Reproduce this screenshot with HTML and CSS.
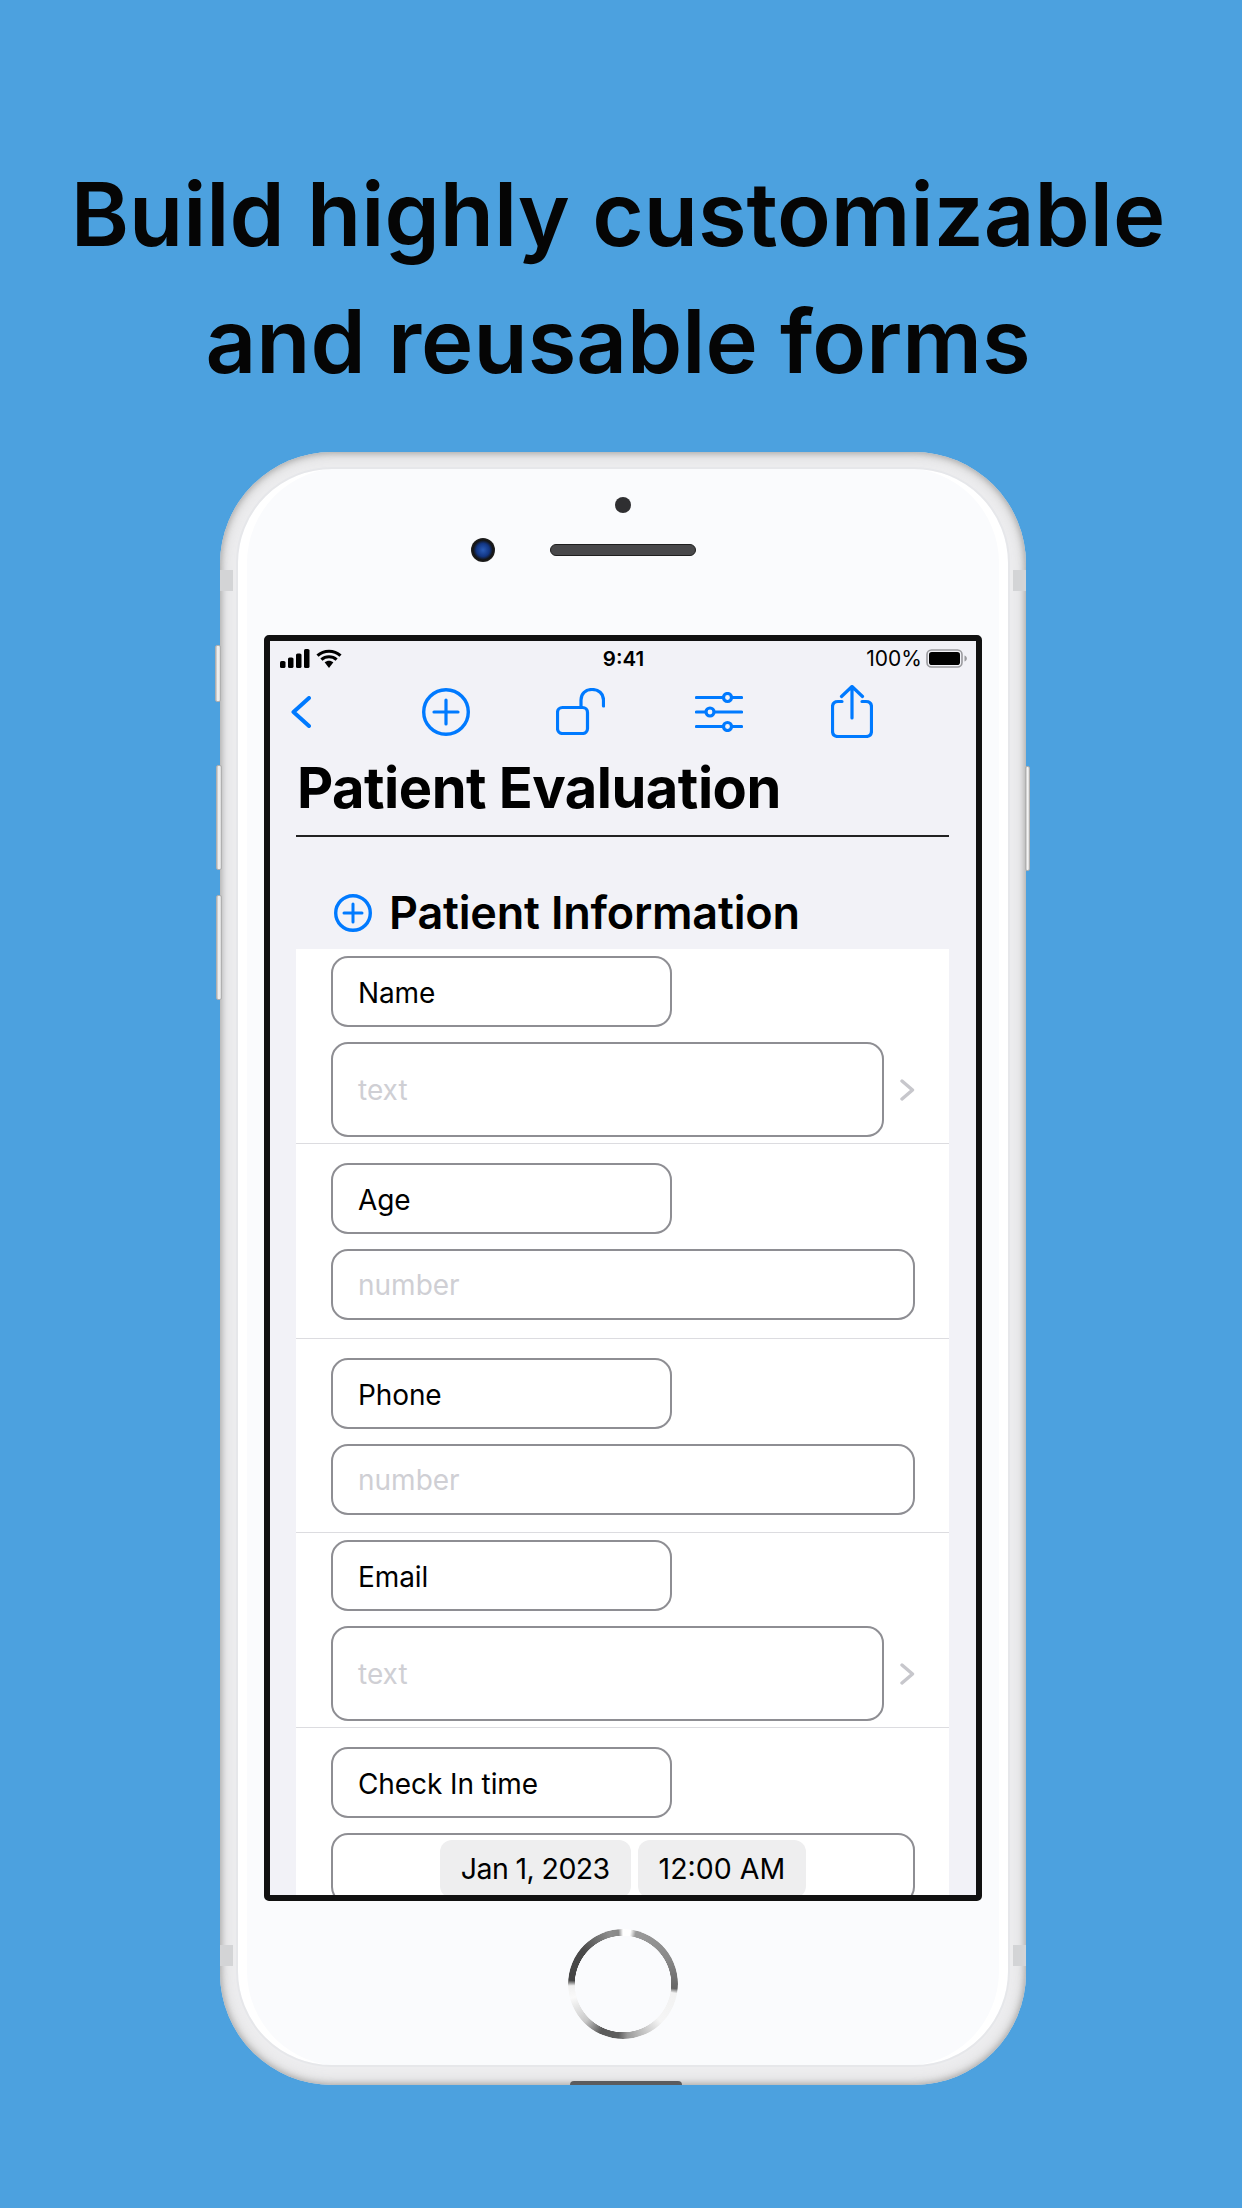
FILE: index.html
```html
<!DOCTYPE html>
<html lang="en">
<head>
<meta charset="utf-8">
<title>Patient Evaluation</title>
<link rel="stylesheet" href="styles.css">
</head>
<body>
<h1 class="headline">Build highly customizable<br>and reusable forms</h1>
<div class="phone">
  <span class="side side-mute"></span>
  <span class="side side-up"></span>
  <span class="side side-down"></span>
  <span class="side side-power"></span>
  <span class="band band-tl"></span>
  <span class="band band-tr"></span>
  <span class="band band-bl"></span>
  <span class="band band-br"></span>
  <span class="port"></span>
  <div class="face">
    <div class="bezel-top">
      <span class="sensor"></span>
      <div class="speaker"><span class="camera"></span></div>
    </div>
    <div class="screen">
      <div class="status">
        <div class="status-left">
          <svg class="i-signal" viewBox="0 0 30 19"><rect x="0" y="12" width="5.5" height="7" rx="1.6"/><rect x="8" y="8.5" width="5.5" height="10.5" rx="1.6"/><rect x="16" y="4.5" width="5.5" height="14.5" rx="1.6"/><rect x="24" y="0" width="5.5" height="19" rx="1.6"/></svg>
          <svg class="i-wifi" viewBox="0 0 26 19"><path d="M1.5 6.6C8 .8 18 .8 24.5 6.6M5.4 10.6c4.4-3.8 10.8-3.8 15.2 0" fill="none" stroke="#000" stroke-width="3.2"/><path d="M8.6 13.2c2.7-2.1 6.1-2.1 8.8 0L13 19z"/></svg>
        </div>
        <div class="status-time">9:41</div>
        <div class="status-right">
          <span class="pct">100%</span>
          <svg class="i-batt" viewBox="0 0 41 19"><rect x="1" y="1" width="35" height="17" rx="4.5" fill="none" stroke="#9a9a9e" stroke-width="1.6"/><rect x="3" y="3" width="31" height="13" rx="2.8"/><path d="M38.5 6.5c1.6.5 2.3 1.6 2.3 3s-.7 2.5-2.3 3z" fill="#9a9a9e"/></svg>
        </div>
      </div>
      <div class="toolbar">
        <svg class="i-back" viewBox="0 0 20 32"><path d="M18 2 2.500 16 18 30" fill="none" stroke="#007aff" stroke-width="4" stroke-linecap="round" stroke-linejoin="round"/></svg>
        <svg class="i-plus" viewBox="0 0 48 48"><circle cx="24" cy="24" r="22.300" fill="none" stroke="#007aff" stroke-width="3.400"/><path d="M24 12v24M12 24h24" stroke="#007aff" stroke-width="3.200" stroke-linecap="round"/></svg>
        <svg class="i-lock" viewBox="0 0 49 47"><rect x="1.500" y="19.500" width="30" height="26" rx="5" fill="none" stroke="#007aff" stroke-width="3.200"/><path d="M25 19V12C25 5.500 29.500 1.500 36 1.500S47.500 5.500 47.500 12V18" fill="none" stroke="#007aff" stroke-width="3.200" stroke-linecap="round"/></svg>
        <svg class="i-sliders" viewBox="0 0 48 40"><g stroke="#007aff" stroke-width="3.200" stroke-linecap="round" fill="#f2f2f7"><path d="M1.500 5.500h45M1.500 20h45M1.500 34.500h45"/><circle cx="32.500" cy="5.500" r="4"/><circle cx="15" cy="20" r="4"/><circle cx="32.500" cy="34.500" r="4"/></g></svg>
        <svg class="i-share" viewBox="0 0 42 53"><path d="M11 16.500H7C3.500 16.500 1.500 18.500 1.500 22V46C1.500 49.500 3.500 51.500 7 51.500H35C38.500 51.500 40.500 49.500 40.500 46V22C40.500 18.500 38.500 16.500 35 16.500H31" fill="none" stroke="#007aff" stroke-width="3.200" stroke-linecap="round"/><path d="M21 33V2M10.500 11.500 21 1.500 31.500 11.500" fill="none" stroke="#007aff" stroke-width="3.200" stroke-linecap="round" stroke-linejoin="round"/></svg>
      </div>
      <div class="content">
        <h2 class="title">Patient Evaluation</h2>
        <div class="section-head">
          <svg class="i-section" viewBox="0 0 38 38"><circle cx="19" cy="19" r="17.300" fill="none" stroke="#007aff" stroke-width="3.400"/><path d="M19 10v18M10 19h18" stroke="#007aff" stroke-width="3" stroke-linecap="round"/></svg>
          <h3 class="section-title">Patient Information</h3>
        </div>
        <div class="panel">
          <div class="row row-tight">
            <div class="box label">Name</div>
            <div class="field-line">
              <div class="box input tall">text</div>
              <svg class="i-chev" viewBox="0 0 15 22"><path d="M2 2 12.500 11 2 20" fill="none" stroke="#c7c7cc" stroke-width="3.400" stroke-linecap="round" stroke-linejoin="round"/></svg>
            </div>
          </div>
          <div class="row row-wide">
            <div class="box label">Age</div>
            <div class="box input">number</div>
          </div>
          <div class="row row-wide">
            <div class="box label">Phone</div>
            <div class="box input">number</div>
          </div>
          <div class="row row-tight">
            <div class="box label">Email</div>
            <div class="field-line">
              <div class="box input tall">text</div>
              <svg class="i-chev" viewBox="0 0 15 22"><path d="M2 2 12.500 11 2 20" fill="none" stroke="#c7c7cc" stroke-width="3.400" stroke-linecap="round" stroke-linejoin="round"/></svg>
            </div>
          </div>
          <div class="row row-last">
            <div class="box label">Check In time</div>
            <div class="box dates">
              <span class="pill pill-date">Jan 1, 2023</span>
              <span class="pill pill-time">12:00 AM</span>
            </div>
          </div>
        </div>
      </div>
    </div>
    <div class="home"></div>
  </div>
</div>
</body>
</html>
```
FILE: styles.css
```css
* { box-sizing: border-box; }
html, body { margin: 0; padding: 0; }
body {
  width: 1242px;
  height: 2208px;
  overflow: hidden;
  background: #4ca1df;
  font-family: Inter, "Liberation Sans", sans-serif;
  color: #000;
}
.headline {
  margin: 0;
  padding: 150px 6px 0 0;
  font-family: Inter, sans-serif;
  font-weight: 600;
  font-size: 88.5px;
  line-height: 127px;
  text-align: center;
  color: #050505;
}
.phone {
  position: relative;
  width: 806px;
  height: 1633px;
  margin: 48px 0 0 220px;
  padding: 15px 16px 18px;
  border-radius: 112px;
  background: #ededef;
  box-shadow: inset 0 0 6px 1px #a6a6a6, inset 0 0 14px 3px #d6d6d6;
}
.side {
  position: absolute;
  background: linear-gradient(90deg, #bdbdbd, #f6f6f6 45%, #d8d8d8);
  border: 1px solid #b0b0b0;
  border-radius: 2px;
}
.side-mute { left: -5px; top: 193px; width: 6px; height: 57px; }
.side-up { left: -4px; top: 313px; width: 6px; height: 105px; }
.side-down { left: -4px; top: 443px; width: 6px; height: 105px; }
.side-power { right: -4px; top: 314px; width: 5px; height: 105px; }
.band { position: absolute; width: 13px; height: 21px; background: #d3d4d6; }
.band-tl { left: 0; top: 118px; }
.band-tr { right: 0; top: 118px; }
.band-bl { left: 0; top: 1493px; }
.band-br { right: 0; top: 1493px; }
.port {
  position: absolute;
  left: 350px;
  bottom: 0;
  width: 112px;
  height: 4px;
  border-radius: 4px 4px 0 0;
  background: #5b5b5e;
}
.face {
  position: relative;
  height: 100%;
  border-radius: 96px;
  border: 2px solid #e6e7ea;
  background: #fafbfd;
  box-shadow: inset 10px 0 0 -1px #fff, inset -10px 0 0 -1px #fff;
  padding: 0 26px;
  display: flex;
  flex-direction: column;
}
.bezel-top {
  height: 166px;
  display: flex;
  flex-direction: column;
  align-items: center;
  flex: none;
}
.sensor {
  width: 16px;
  height: 16px;
  margin-top: 28px;
  border-radius: 50%;
  background: #2f2f31;
}
.speaker {
  position: relative;
  width: 146px;
  height: 12px;
  margin-top: 31px;
  border-radius: 6px;
  border: 1px solid #1e1e1e;
  background: #48484a;
}
.camera {
  position: absolute;
  left: -80px;
  top: -7px;
  width: 24px;
  height: 24px;
  border-radius: 50%;
  background: radial-gradient(circle at 50% 50%, #2a5cb8 0, #123684 38%, #141414 58%, #2a2a2a 82%, #5a5a5a 100%);
}
.screen {
  flex: none;
  width: 718px;
  height: 1266px;
  border: 6px solid #111;
  border-radius: 5px;
  background: #f2f2f7;
  overflow: hidden;
}
.status {
  display: grid;
  grid-template-columns: 1fr auto 1fr;
  align-items: center;
  height: 34px;
  padding: 0 9px 0 10px;
}
.status-left { display: flex; align-items: center; gap: 6px; }
.status-time { font-weight: 600; font-size: 20.5px; }
.status-right { display: flex; justify-content: flex-end; align-items: center; gap: 4px; }
.pct { font-size: 21px; }
.i-signal { width: 30px; height: 19px; }
.i-wifi { width: 26px; height: 19px; }
.i-batt { width: 41px; height: 19px; }
.toolbar {
  display: flex;
  align-items: center;
  height: 53px;
  margin-top: 10px;
  padding-left: 21px;
}
.i-back { width: 20px; height: 32px; }
.i-plus { width: 48px; height: 48px; margin-left: 111px; }
.i-lock { width: 49px; height: 47px; margin-left: 86px; }
.i-sliders { width: 48px; height: 40px; margin-left: 90px; }
.i-share { width: 42px; height: 53px; margin-left: 88px; }
.content { padding: 0 27px 0 26px; }
.title {
  margin: 0;
  padding: 18px 0 0 1px;
  height: 99px;
  border-bottom: 2px solid #222;
  font-weight: 700;
  font-size: 56px;
  line-height: 64px;
  letter-spacing: -0.5px;
}
.section-head {
  display: flex;
  align-items: center;
  gap: 17px;
  height: 112px;
  padding: 39px 0 0 38px;
}
.i-section { width: 38px; height: 38px; flex: none; }
.section-title {
  margin: 0;
  font-weight: 600;
  font-size: 45px;
  line-height: 56px;
  letter-spacing: -0.2px;
}
.panel { background: #fff; }
.row {
  display: flex;
  flex-direction: column;
  gap: 15px;
  padding: 0 34px 0 35px;
  border-bottom: 1px solid #dcdce0;
}
.row-tight { padding-top: 7px; padding-bottom: 6px; }
.row-wide { padding-top: 19px; padding-bottom: 17.5px; }
.row-last { padding-top: 19px; border-bottom: 0; }
.box {
  display: flex;
  align-items: center;
  height: 71px;
  padding: 1px 25px 0;
  border: 2px solid #8e8e93;
  border-radius: 17px;
  font-size: 28px;
}
.label { width: 341px; padding-top: 3px; letter-spacing: -0.1px; }
.input { color: #cfcfd4; }
.tall { height: 95px; flex: 1; }
.field-line { display: flex; align-items: center; gap: 16px; }
.i-chev { width: 15px; height: 22px; flex: none; }
.dates {
  justify-content: center;
  gap: 7px;
  padding: 0;
}
.pill {
  display: flex;
  align-items: center;
  height: 58px;
  padding: 0 21px;
  border-radius: 12px;
  background: #eeeeef;
  font-size: 28.5px;
}
.pill-date { letter-spacing: -0.6px; }
.pill-time { letter-spacing: 0; }
.home {
  position: relative;
  flex: none;
  align-self: center;
  width: 110px;
  height: 110px;
  margin-top: 28px;
  border-radius: 50%;
  background: conic-gradient(#ffffff 0deg, #ffffff 8deg, #9a9a9a 14deg, #8a8a8a 60deg, #666 95deg, #f2f2f2 100deg, #f5f5f5 135deg, #bdbdbd 160deg, #999 175deg, #5e5e5e 185deg, #5a5a5a 205deg, #c8c8c8 225deg, #fafafa 255deg, #f0f0f0 268deg, #444 274deg, #4a4a4a 310deg, #8d8d8d 345deg, #888 355deg, #fff 360deg);
  -webkit-mask: radial-gradient(circle, transparent 48px, #000 48.500px);
  mask: radial-gradient(circle, transparent 48px, #000 48.500px);
}
```
